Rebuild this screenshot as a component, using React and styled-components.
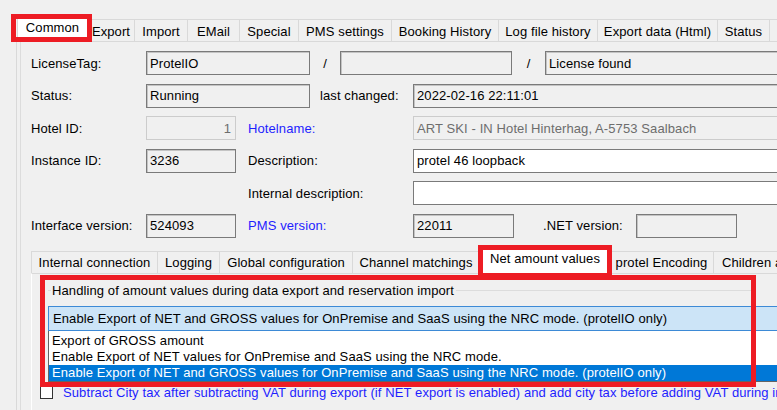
import React from 'react';
import styled, { createGlobalStyle, css } from 'styled-components';

const GlobalStyle = createGlobalStyle`
  html, body {
    margin: 0;
    padding: 0;
    background: #f0f0f0;
  }
  body {
    font-family: "Liberation Sans", Arial, sans-serif;
    font-size: 13px;
    letter-spacing: 0.1px;
    color: #000;
  }
`;

const Window = styled.div`
  width: 777px;
  height: 410px;
  overflow: hidden;
  padding-top: 16px;
  box-sizing: border-box;
  background: #f0f0f0;
`;

const TabStrip = styled.div`
  display: flex;
  align-items: flex-end;
  height: ${p => p.h}px;
  margin-top: ${p => p.top || 0}px;
  padding-left: ${p => p.left}px;
  white-space: nowrap;
`;

const Tab = styled.div`
  position: relative;
  flex: none;
  box-sizing: border-box;
  width: ${p => p.w}px;
  height: 22px;
  border: 1px solid #d9d9d9;
  border-bottom: none;
  border-left-width: ${p => (p.first ? 1 : 0)}px;
  background: #f0f0f0;
  display: flex;
  align-items: center;
  justify-content: center;
  padding-top: 1px;
  overflow: hidden;

  ${p => p.active && css`
    height: ${p.tall}px;
    background: #fff;
    border-left-width: 1px;
    margin-bottom: -1px;
    padding-top: 0;
    padding-bottom: 5px;
    z-index: 1;
    overflow: visible;
  `}
`;

const Mark = styled.span`
  position: absolute;
  box-sizing: border-box;
  top: ${p => p.t}px;
  left: ${p => p.l}px;
  right: ${p => p.r}px;
  bottom: ${p => p.b}px;
  border: 5px solid #ed1c24;
  pointer-events: none;
  z-index: 5;
`;

const GroupMark = styled(Mark)`
  right: auto;
  bottom: auto;
  width: 716px;
  height: 112px;
`;

const OuterPage = styled.div`
  margin-left: 16px;
  border-left: 1px solid #d9d9d9;
  border-top: 1px solid #d9d9d9;
`;

const Frame = styled.div`
  margin-left: 3px;
  border-left: 1px solid #dcdcdc;
  padding: 9px 0 0 10px;
  height: 400px;
`;

const Form = styled.div`
  display: flex;
  flex-direction: column;
  gap: 8.6px;
`;

const Row = styled.div`
  display: flex;
  align-items: center;
  height: 24px;
`;

const Label = styled.div`
  flex: none;
  box-sizing: border-box;
  width: ${p => p.w}px;
  padding-left: ${p => p.pad || 0}px;
  color: ${p => (p.link ? '#1e1eff' : '#000')};
  white-space: nowrap;
`;

const Sep = styled.div`
  flex: none;
  width: ${p => p.w}px;
  text-align: center;
`;

const Field = styled.div`
  flex: none;
  box-sizing: border-box;
  width: ${p => p.w}px;
  height: 24px;
  display: flex;
  align-items: center;
  justify-content: ${p => (p.right ? 'flex-end' : 'flex-start')};
  padding: 0 4px 0 3px;
  white-space: nowrap;
  overflow: hidden;
  background: #f0f0f0;
  border: 1px solid #7a7a7a;
  box-shadow: inset 1px 1px 0 #c4c4c4;

  ${p => p.white && css`
    background: #fff;
    box-shadow: none;
  `}

  ${p => p.disabled && css`
    color: #6d6d6d;
    border-color: #cccccc;
    box-shadow: none;
  `}
`;

const InnerPage = styled.div`
  border-top: 1px solid #d9d9d9;
  border-left: 1px solid #fff;
  padding-left: 8px;
  height: 140px;
`;

const GroupWrap = styled.div`
  position: relative;
  padding: 10px 0 0 8px;
`;

const CaptionRow = styled.div`
  display: flex;
  align-items: center;
  height: 14px;
  width: 704px;

  &::before {
    content: '';
    width: 3px;
    border-top: 1px solid #dcdcdc;
  }
  &::after {
    content: '';
    flex: 1;
    border-top: 1px solid #dcdcdc;
  }
`;

const Caption = styled.span`
  padding: 0 2px 0 1px;
  white-space: nowrap;
`;

const Combo = styled.div`
  box-sizing: border-box;
  margin-top: 8px;
  width: 740px;
  height: 25px;
  display: flex;
  align-items: center;
  padding-left: 4px;
  background: #cce4f7;
  border: 1px solid #3d8ad6;
  white-space: nowrap;
`;

const List = styled.div`
  box-sizing: border-box;
  width: 740px;
  border: 1px solid #646464;
  border-top: none;
  padding-top: 2px;
  background: #fff;
`;

const Item = styled.div`
  height: 16px;
  line-height: 16px;
  padding-left: 3px;
  white-space: nowrap;
  ${p => p.selected && css`
    background: #0078d7;
    color: #fff;
  `}
`;

const CheckRow = styled.div`
  display: flex;
  align-items: center;
  gap: 10px;
  margin-top: 4px;
  height: 13px;
  color: #1e1eff;
  white-space: nowrap;
`;

const Box = styled.span`
  flex: none;
  box-sizing: border-box;
  width: 13px;
  height: 13px;
  background: #fff;
  border: 1px solid #333;
`;

const outerTabs = [
  ['Common', 71],
  ['Export', 47],
  ['Import', 53],
  ['EMail', 52],
  ['Special', 59],
  ['PMS settings', 93],
  ['Booking History', 107],
  ['Log file history', 99],
  ['Export data (Html)', 120],
  ['Status', 52],
  ['', 40],
];

const innerTabs = [
  ['Internal connection', 127],
  ['Logging', 62],
  ['Global configuration', 133],
  ['Channel matchings', 127],
  ['Net amount values', 130],
  ['protel Encoding', 104],
  ['Children age', 92],
];

export default function App() {
  return (
    <Window>
      <GlobalStyle />
      <TabStrip h={25} left={17}>
        {outerTabs.map(([name, w], i) => (
          <Tab key={i} w={w} first={i === 0} active={i === 0} tall={26}>
            {name}
            {i === 0 && <Mark t={-3} l={-7} r={-5} b={0} />}
          </Tab>
        ))}
      </TabStrip>
      <OuterPage>
        <Frame>
          <Form>
            <Row>
              <Label w={115}>LicenseTag:</Label>
              <Field w={164}>ProtelIO</Field>
              <Sep w={30}>/</Sep>
              <Field w={172}></Field>
              <Sep w={33}>/</Sep>
              <Field w={240}>License found</Field>
            </Row>
            <Row>
              <Label w={115}>Status:</Label>
              <Field w={164}>Running</Field>
              <Label w={103} pad={10}>last changed:</Label>
              <Field w={380}>2022-02-16 22:11:01</Field>
            </Row>
            <Row>
              <Label w={115}>Hotel ID:</Label>
              <Field w={90} right disabled>1</Field>
              <Label w={177} pad={12} link>Hotelname:</Label>
              <Field w={380} disabled>ART SKI - IN Hotel Hinterhag, A-5753 Saalbach</Field>
            </Row>
            <Row>
              <Label w={115}>Instance ID:</Label>
              <Field w={90}>3236</Field>
              <Label w={177} pad={12}>Description:</Label>
              <Field w={380} white>protel 46 loopback</Field>
            </Row>
            <Row>
              <Label w={205}></Label>
              <Label w={177} pad={12}>Internal description:</Label>
              <Field w={380} white></Field>
            </Row>
            <Row>
              <Label w={115}>Interface version:</Label>
              <Field w={90}>524093</Field>
              <Label w={177} pad={12} link>PMS version:</Label>
              <Field w={101}>22011</Field>
              <Label w={122} pad={29}>.NET version:</Label>
              <Field w={101}></Field>
            </Row>
          </Form>

          <TabStrip h={27} left={0} top={8}>
            {innerTabs.map(([name, w], i) => (
              <Tab key={i} w={w} first={i === 0} active={i === 4} tall={27}>
                {name}
                {i === 4 && <Mark t={-3} l={-3} r={-3} b={-4} />}
              </Tab>
            ))}
          </TabStrip>
          <InnerPage>
            <GroupWrap>
              <CaptionRow>
                <Caption>Handling of amount values during data export and reservation import</Caption>
              </CaptionRow>
              <Combo>Enable Export of NET and GROSS values for OnPremise and SaaS using the NRC mode. (protelIO only)</Combo>
              <List>
                <Item>Export of GROSS amount</Item>
                <Item>Enable Export of NET values for OnPremise and SaaS using the NRC mode.</Item>
                <Item selected>Enable Export of NET and GROSS values for OnPremise and SaaS using the NRC mode. (protelIO only)</Item>
              </List>
              <GroupMark t={1} l={0} />
            </GroupWrap>
            <CheckRow>
              <Box />
              Subtract City tax after subtracting VAT during export (if NET export is enabled) and add city tax before adding VAT during import
            </CheckRow>
          </InnerPage>
        </Frame>
      </OuterPage>
    </Window>
  );
}
